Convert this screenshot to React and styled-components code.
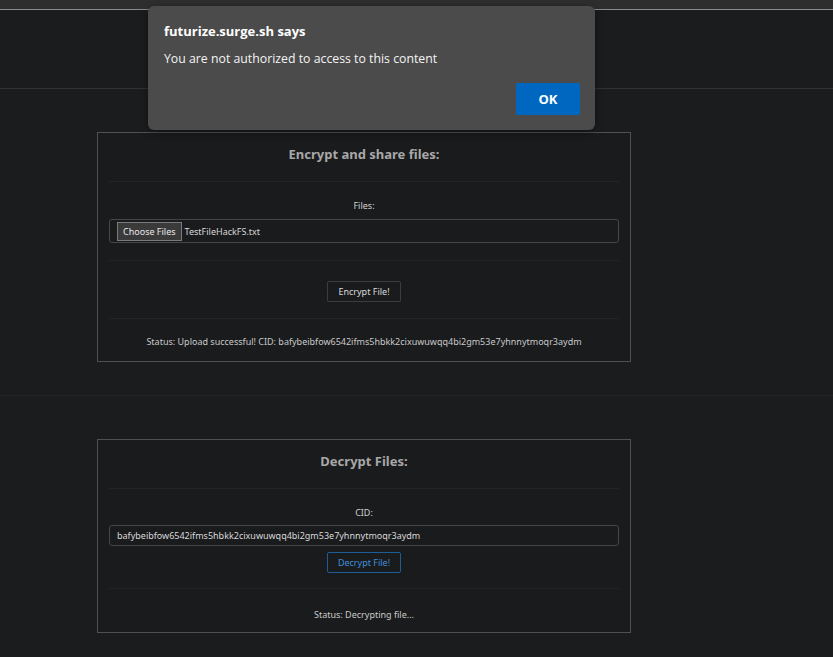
import styled, { createGlobalStyle } from "styled-components";

const GlobalStyle = createGlobalStyle`
    html, body {
        margin: 0;
        padding: 0;
        background: #1b1c1e;
        font-family: "Noto Sans", "Liberation Sans", sans-serif;
    }
`

const Page = styled.div`
    position: relative;
    min-height: 657px;
    background: #1b1c1e;
    overflow: hidden;
`

const TopStrip = styled.div`
    height: 9px;
    background: #2e2e2f;
    border-bottom: 1px solid #8a8a8a;
`

const Header = styled.div`
    height: 78px;
    border-bottom: 1px solid #303134;
`

const Section = styled.section`
    padding: ${props => props.pad};
    border-bottom: ${props => props.line ? "1px solid #242528" : "none"};
`

const Card = styled.div`
    box-sizing: border-box;
    width: 534px;
    margin-left: 97px;
    border: 1px solid #4f5053;
    background: #1a1b1d;
    padding: 0 11px;
`

const Row = styled.div`
    display: flex;
    flex-direction: column;
    align-items: center;
    padding: ${props => props.pad};
    border-bottom: ${props => props.last ? "none" : "1px solid #242528"};
`

const Title = styled.h2`
    margin: 0;
    font-size: 13px;
    line-height: 18px;
    font-weight: 700;
    color: #a8a8a8;
`

const Label = styled.label`
    font-size: 9px;
    line-height: 13px;
    color: #d0d0d0;
    margin-bottom: ${props => props.gap}px;
`

const InputBox = styled.div`
    align-self: stretch;
    box-sizing: border-box;
    height: ${props => props.h}px;
    display: flex;
    align-items: center;
    gap: 3px;
    padding: 0 ${props => props.pl}px;
    border: 1px solid #45464a;
    border-radius: 3px;
    font-size: 9px;
    color: #d8d8d8;
`

const ChooseButton = styled.span`
    display: inline-flex;
    align-items: center;
    height: 19px;
    padding: 0 5px;
    box-sizing: border-box;
    background: #3a3a3b;
    border: 1px solid #7a7a7a;
    color: #e8e8e8;
    font-size: 9px;
`

const ActionButton = styled.button`
    height: 21px;
    padding: 0 10px;
    margin-top: ${props => props.mt || 0}px;
    background: transparent;
    border: 1px solid ${props => props.blue ? "#1d5d98" : "#3c3d40"};
    border-radius: 2px;
    color: ${props => props.blue ? "#3e8fdf" : "#dcdcdc"};
    font-family: inherit;
    font-size: 9px;
`

const Status = styled.p`
    margin: 0;
    font-size: 9px;
    line-height: 13px;
    color: #c9c9c9;
`

const Dialog = styled.div`
    position: absolute;
    left: 148px;
    top: 6px;
    width: 447px;
    height: 124px;
    box-sizing: border-box;
    background: #4b4b4b;
    border-radius: 6px;
    padding: 17px 15px 15px 16px;
    display: flex;
    flex-direction: column;
    font-family: "Open Sans", "Noto Sans", sans-serif;
    color: #fff;
    box-shadow: 0 2px 8px rgba(0, 0, 0, 0.4);
`

const DialogTitle = styled.div`
    font-size: 13px;
    font-weight: 700;
    line-height: 16px;
`

const DialogText = styled.div`
    margin-top: 12px;
    font-size: 12.3px;
    line-height: 16px;
    color: #f4f4f4;
`

const OkButton = styled.button`
    align-self: flex-end;
    margin-top: auto;
    width: 64px;
    height: 32px;
    background: #0067c0;
    border: none;
    border-radius: 2px;
    color: #fff;
    font-family: inherit;
    font-weight: 700;
    font-size: 13px;
`

const cid = "bafybeibfow6542ifms5hbkk2cixuwuwqq4bi2gm53e7yhnnytmoqr3aydm"

export default function App() {
    return (
        <Page>
            <GlobalStyle />
            <TopStrip />
            <Header />
            <Section pad="43px 0 33px" line>
                <Card>
                    <Row pad="12px 0 18px">
                        <Title>Encrypt and share files:</Title>
                    </Row>
                    <Row pad="17px 0 17px">
                        <Label gap={7}>Files:</Label>
                        <InputBox h={24} pl={7}>
                            <ChooseButton>Choose Files</ChooseButton>
                            <span>TestFileHackFS.txt</span>
                        </InputBox>
                    </Row>
                    <Row pad="20px 0 16px">
                        <ActionButton>Encrypt File!</ActionButton>
                    </Row>
                    <Row pad="16px 0 13px" last>
                        <Status>Status: Upload successful! CID: {cid}</Status>
                    </Row>
                </Card>
            </Section>
            <Section pad="43px 0 24px">
                <Card>
                    <Row pad="12px 0 18px">
                        <Title>Decrypt Files:</Title>
                    </Row>
                    <Row pad="17px 0 15px">
                        <Label gap={6}>CID:</Label>
                        <InputBox h={21} pl={7}>{cid}</InputBox>
                        <ActionButton blue mt={6}>Decrypt File!</ActionButton>
                    </Row>
                    <Row pad="19px 0 11px" last>
                        <Status>Status: Decrypting file...</Status>
                    </Row>
                </Card>
            </Section>
            <Dialog>
                <DialogTitle>futurize.surge.sh says</DialogTitle>
                <DialogText>You are not authorized to access to this content</DialogText>
                <OkButton>OK</OkButton>
            </Dialog>
        </Page>
    );
}
